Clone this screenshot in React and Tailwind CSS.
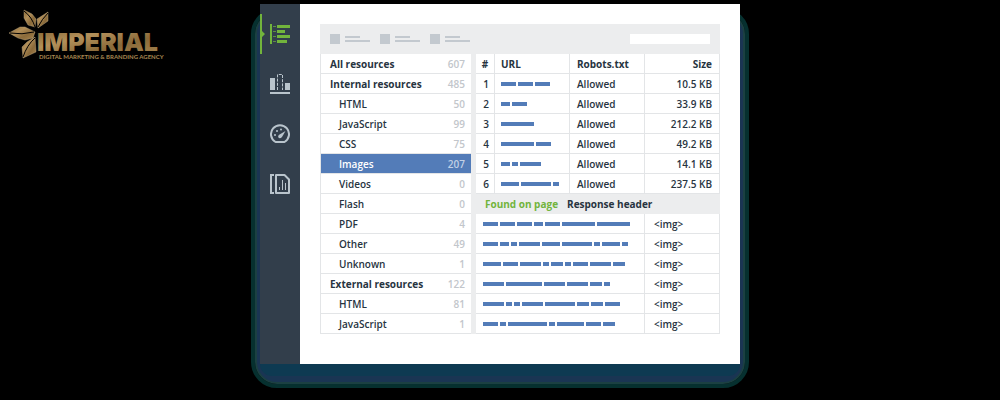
const resources = [
  { name: "All resources", count: 607, group: true },
  { name: "Internal resources", count: 485, group: true },
  { name: "HTML", count: 50 },
  { name: "JavaScript", count: 99 },
  { name: "CSS", count: 75 },
  { name: "Images", count: 207, active: true },
  { name: "Videos", count: 0 },
  { name: "Flash", count: 0 },
  { name: "PDF", count: 4 },
  { name: "Other", count: 49 },
  { name: "Unknown", count: 1 },
  { name: "External resources", count: 122, group: true },
  { name: "HTML", count: 81 },
  { name: "JavaScript", count: 1 },
];

// url / page values are lists of dash widths
const files = [
  { url: [15, 15, 15], robots: "Allowed", size: "10.5 KB" },
  { url: [9, 15], robots: "Allowed", size: "33.9 KB" },
  { url: [33], robots: "Allowed", size: "212.2 KB" },
  { url: [33, 15], robots: "Allowed", size: "49.2 KB" },
  { url: [9, 6, 21], robots: "Allowed", size: "14.1 KB" },
  { url: [18, 30, 6], robots: "Allowed", size: "237.5 KB" },
];

const pages = [
  [15, 15, 15, 9, 15, 33, 33],
  [15, 9, 6, 21, 18, 30, 6, 18, 6],
  [18, 15, 21, 6, 12, 6, 15, 21, 12],
  [21, 36, 21, 21, 12, 6],
  [21, 6, 6, 21, 30, 12, 12, 15],
  [15, 6, 39, 6, 27, 15, 12],
];

const Logo = () => (
  <svg width="156" height="52" viewBox="0 0 156 52" role="img" aria-label="Imperial">
    <defs>
      <linearGradient id="gold" x1="0" y1="0" x2="1" y2="1">
        <stop offset="0" stopColor="#80602f" />
        <stop offset="0.35" stopColor="#b3905a" />
        <stop offset="0.65" stopColor="#8a6a3a" />
        <stop offset="1" stopColor="#a88650" />
      </linearGradient>
    </defs>
    <g fill="url(#gold)" stroke="#c4b08a" strokeWidth="0.4">
      <path d="M15 1L23 5L27 10L26 18L19 16L15 9Z" />
      <path d="M39 3V12L29 19L28 10Z" />
      <path d="M0 24L11 18L16 18L26 23L24 29L16 31L9 29Z" />
      <path d="M13 38L18 33L26 28L27 43L14 49Z" />
    </g>
    <g fill="none" stroke="#000" strokeWidth="1">
      <path d="M15 2Q23 8 26 18" />
      <path d="M39 4Q33 10 29 18" />
      <path d="M1 24Q13 26 25 23" />
      <path d="M14 48Q18 36 26 29" />
    </g>
    <text
      x="28"
      y="42"
      fill="url(#gold)"
      className="font-['Inter',sans-serif] text-[25px] font-black"
    >
      IMPERIAL
    </text>
    <text
      x="30"
      y="50"
      fill="#a98850"
      className="font-['Lato',sans-serif] text-[6px] font-bold"
    >
      DIGITAL MARKETING &amp; BRANDING AGENCY
    </text>
  </svg>
);

const ListIcon = () => (
  <svg width="20" height="20" fill="currentColor">
    <path d="M0 0h2v20H0zM7 1h13v3H7zM7 6h8v3H7zM7 11h13v3H7zM7 16h10v3H7z" />
    <path d="M3 2h3v1H3zM3 7h3v1H3zM3 12h3v1H3zM3 17h3v1H3z" opacity="0.7" />
  </svg>
);

const ChartIcon = () => (
  <svg width="20" height="20" fill="currentColor">
    <path d="M0 4h5v12H0zM15 9h5v7h-5zM0 18h20v2H0z" />
    <path
      d="M7.5 16V0.5h5V16"
      fill="none"
      stroke="currentColor"
      strokeDasharray="3 1.2"
    />
  </svg>
);

const GaugeIcon = () => (
  <svg width="20" height="20" fill="currentColor">
    <path
      d="M5.5 18A9 9 0 1 1 14.5 18Z"
      fill="none"
      stroke="currentColor"
      strokeWidth="2"
      strokeLinejoin="round"
    />
    <path d="M15.5 7L12 13Q10 15 8.4 13.6Q7.4 12 9.2 10.8Z" />
    <circle cx="5" cy="11" r="1" />
    <circle cx="7" cy="7" r="1" />
    <circle cx="11" cy="5.5" r="1" />
  </svg>
);

const ReportIcon = () => (
  <svg width="20" height="20" fill="none" stroke="currentColor" strokeWidth="2">
    <path d="M4 1H1v18h3" />
    <path d="M6 1h8.5L19 5.5V19H6Z" strokeLinejoin="round" />
    <path d="M9.5 16v-3M12.5 16V6M15.5 16V9" strokeWidth="1" />
  </svg>
);

const navItems = [
  { label: "Resources", icon: ListIcon, active: true },
  { label: "Statistics", icon: ChartIcon },
  { label: "Performance", icon: GaugeIcon },
  { label: "Reports", icon: ReportIcon },
];

const Sidebar = () => (
  <nav className="flex w-10 shrink-0 flex-col gap-2.5 bg-[#323e4b] pt-2.5">
    {navItems.map(({ label, icon: Icon, active }) => (
      <button
        key={label}
        type="button"
        aria-label={label}
        className={
          active
            ? "relative flex h-10 items-center justify-center text-[#72b43c]"
            : "relative flex h-10 items-center justify-center text-[#b9c4cc]"
        }
      >
        {active && (
          <svg className="absolute left-0 top-0" width="5" height="40" fill="currentColor">
            <path d="M0 0h2v17l3 3l-3 3v17H0z" />
          </svg>
        )}
        <Icon />
      </button>
    ))}
  </nav>
);

const Toolbar = () => (
  <div className="flex h-[30px] items-center gap-2.5 bg-[#ecedee] px-2.5">
    {[1, 2, 3].map((n) => (
      <div key={n} className="flex w-10 items-center gap-[5px]">
        <span className="size-2.5 bg-[#c3c9cf]" />
        <span className="flex flex-col gap-0.5">
          <span className="h-0.5 w-[15px] bg-[#c3c9cf]" />
          <span className="h-0.5 w-[25px] bg-[#c3c9cf]" />
        </span>
      </div>
    ))}
    <input type="text" aria-label="Search" className="ml-auto h-2.5 w-20 bg-white" />
  </div>
);

const ResourceList = () => (
  <ul className="w-[151px] shrink-0 border-l border-[#e3e5e7]">
    {resources.map(({ name, count, group, active }, i) => (
      <li
        key={i}
        className={
          active
            ? "border-b border-[#e3e5e7] bg-[#537cb8] text-white"
            : "border-b border-[#e3e5e7]"
        }
      >
        <button
          type="button"
          className={
            group
              ? "flex h-[19px] w-full items-center justify-between pl-[9px] pr-1.5 font-bold"
              : "flex h-[19px] w-full items-center justify-between pl-[18px] pr-1.5 font-semibold"
          }
        >
          <span>{name}</span>
          <span className={active ? "font-semibold text-[#c1d0e5]" : "font-semibold text-[#c2c6cb]"}>
            {count}
          </span>
        </button>
      </li>
    ))}
  </ul>
);

const Dashes = ({ widths }) => (
  <div className="flex gap-0.5">
    {widths.map((w, i) => (
      <span key={i} className="h-1 bg-[#537cb8]" style={{ width: w }} />
    ))}
  </div>
);

const FilesTable = () => (
  <table className="w-full table-fixed border-separate border-spacing-0">
    <thead>
      <tr className="h-5 *:border-b *:border-r *:border-[#e3e5e7] *:p-0 *:font-bold">
        <th className="w-[19px]">#</th>
        <th className="w-[75px]">
          <div className="pl-1.5 text-left">URL</div>
        </th>
        <th className="w-[75px]">
          <div className="pl-[7px] text-left">Robots.txt</div>
        </th>
        <th>
          <div className="pr-[7px] text-right">Size</div>
        </th>
      </tr>
    </thead>
    <tbody>
      {files.map((file, i) => (
        <tr
          key={i}
          className="h-5 *:border-b *:border-r *:border-[#e3e5e7] *:py-0 *:font-semibold"
        >
          <td className="pl-0.5 pr-0 text-center">{i + 1}</td>
          <td className="pl-1.5">
            <Dashes widths={file.url} />
          </td>
          <td className="pl-[7px]">{file.robots}</td>
          <td className="pr-[7px] text-right">{file.size}</td>
        </tr>
      ))}
    </tbody>
  </table>
);

const PagesTable = () => (
  <table className="w-full table-fixed border-separate border-spacing-0">
    <tbody>
      {pages.map((widths, i) => (
        <tr key={i} className="h-5 *:border-b *:border-r *:border-[#e3e5e7] *:py-0">
          <td className="pl-[7px]">
            <Dashes widths={widths} />
          </td>
          <td className="w-[75px] pl-[9px] font-semibold">&lt;img&gt;</td>
        </tr>
      ))}
    </tbody>
  </table>
);

const App = () => {
  return (
    <div className="grid min-h-screen grid-cols-[1fr_2fr_1fr] items-start bg-black font-['Open_Sans',sans-serif] text-[10px] leading-4 text-[#27343f]">
      <header className="pl-[9px] pt-[9px]">
        <a href="#" className="inline-block">
          <Logo />
        </a>
      </header>

      <main className="mx-px mt-2 rounded-[26px] border-4 border-[#06302f]">
        <div className="rounded-[22px] border-2 border-[#1b4042] bg-[#1a3553] px-[3px] pb-1.5">
          {/* the window sticks out above the frame */}
          <div className="-mt-2.5 flex bg-white">
            <Sidebar />
            <div className="min-w-0 grow px-5 pb-[30px] pt-5">
              <Toolbar />
              <div className="flex">
                <ResourceList />
                <div className="w-[5px] shrink-0 bg-[#ecedee]" />
                <div className="min-w-0 grow">
                  <FilesTable />
                  <div className="flex h-5 items-center gap-[9px] bg-[#ecedee] pl-[9px] font-bold">
                    <button type="button" className="text-[#72b43c]">
                      Found on page
                    </button>
                    <button type="button">Response header</button>
                  </div>
                  <PagesTable />
                </div>
              </div>
            </div>
          </div>
          <div className="h-3 rounded-b-2xl bg-[#0e3a52]" />
        </div>
      </main>
    </div>
  );
};

export default App;
